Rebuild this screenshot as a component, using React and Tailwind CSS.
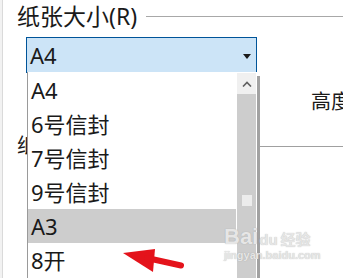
import React from "react";

const items = ["A4", "6号信封", "7号信封", "9号信封", "A3", "8开"];

export default function App() {
  return (
    <div className="relative w-[343px] h-[278px] overflow-hidden bg-white flex text-[#1a1a1a] font-['Noto_Sans','Noto_Sans_CJK_SC',sans-serif]">
      {/* left strip */}
      <div className="w-[3px] shrink-0 bg-[#f2f2f2] border-r border-[#dadada]" />
      <div className="flex-1 flex flex-col">
        {/* group label */}
        <div className="flex items-start pl-[14px] mt-[3px] h-[26px]">
          <span className="text-[23px] leading-[26px] whitespace-nowrap">纸张大小(R)</span>
          <div className="flex-1 h-px bg-[#a8a8a8] ml-[9px] mt-[13px]" />
        </div>
        {/* combobox */}
        <div className="ml-[23px] mt-[8px] w-[231px] h-[36px] bg-[#cce4f7] border border-[#005499] flex items-center pl-[3px] pr-[5px]">
          <span className="flex-1 text-[22px] leading-[26px]">A4</span>
          <svg width="8" height="5" viewBox="0 0 8 5" className="mt-[2px]">
            <polygon points="0,0 8,0 4,5" fill="#1a1a1a" />
          </svg>
        </div>
        {/* background row */}
        <div className="flex mt-[16px] h-[26px]">
          <div className="w-[308px] shrink-0" />
          <span className="text-[20px] leading-[26px] whitespace-nowrap">高度</span>
        </div>
        {/* second group label */}
        <div className="flex items-center pl-[14px] mt-[20px] h-[22px]">
          <span className="text-[20px] leading-[22px] whitespace-nowrap">纸张方向</span>
          <div className="flex-1 h-px bg-[#a0a0a0] ml-[7px]" />
        </div>
      </div>

      {/* dropdown list (overlay) */}
      <div className="absolute left-[27px] top-[72px] w-[234px] h-[220px] flex">
        <div className="w-[230px] flex bg-white border-l border-[#9a9a9a]">
          <div className="w-[208px] flex flex-col pt-px">
            {items.map((t) => (
              <div
                key={t}
                className={
                  "h-[34px] shrink-0 flex items-center pl-[3px] text-[22px] leading-[26px] " +
                  (t === "A3" ? "bg-[#cdcdcd]" : "")
                }
              >
                {t}
              </div>
            ))}
          </div>
          <div className="w-px bg-white" />
          <div className="w-[19px] flex flex-col pt-px">
            <div className="h-[21px] bg-[#f0f0f0] flex items-center justify-center">
              <svg width="10" height="6" viewBox="0 0 10 6">
                <polyline points="1,5.5 5,1.5 9,5.5" fill="none" stroke="#606060" strokeWidth="1.6" />
              </svg>
            </div>
            <div className="flex-1 bg-[#cdcdcd] flex flex-col items-center pt-[101px]">
              <div className="w-[10px] h-[11px] bg-[#ececec]" />
            </div>
          </div>
          <div className="w-px bg-white" />
        </div>
        <div className="w-[3px] mt-[4px] bg-[#a2a2a2]" />
      </div>

      {/* red arrow */}
      <svg
        className="absolute left-[115px] top-[240px]"
        width="75"
        height="38"
        viewBox="0 0 75 38"
      >
        <polygon points="8,13 40,9 38,32" fill="#e4131b" />
        <line x1="32" y1="18" x2="66" y2="25.5" stroke="#e4131b" strokeWidth="6" strokeLinecap="round" />
      </svg>

      {/* watermark */}
      <div className="absolute left-[224px] top-[222px] flex flex-col items-start text-[#e6e6e6] [text-shadow:0_0_1px_rgba(120,120,120,0.5)] pointer-events-none">
        <div className="flex items-end h-[26px]">
          <span className="font-['Liberation_Sans',sans-serif] font-bold text-[22px] leading-[22px]">Bai</span>
          <span className="font-['Liberation_Sans',sans-serif] font-bold text-[15px] leading-[16px] ml-[1px]">du</span>
          <span className="text-[15px] leading-[18px] font-bold ml-[3px]">经验</span>
        </div>
        <span className="font-['Liberation_Sans',sans-serif] font-bold text-[11px] leading-[12px] mt-[1px]">jingyan.baidu.com</span>
      </div>
    </div>
  );
}
